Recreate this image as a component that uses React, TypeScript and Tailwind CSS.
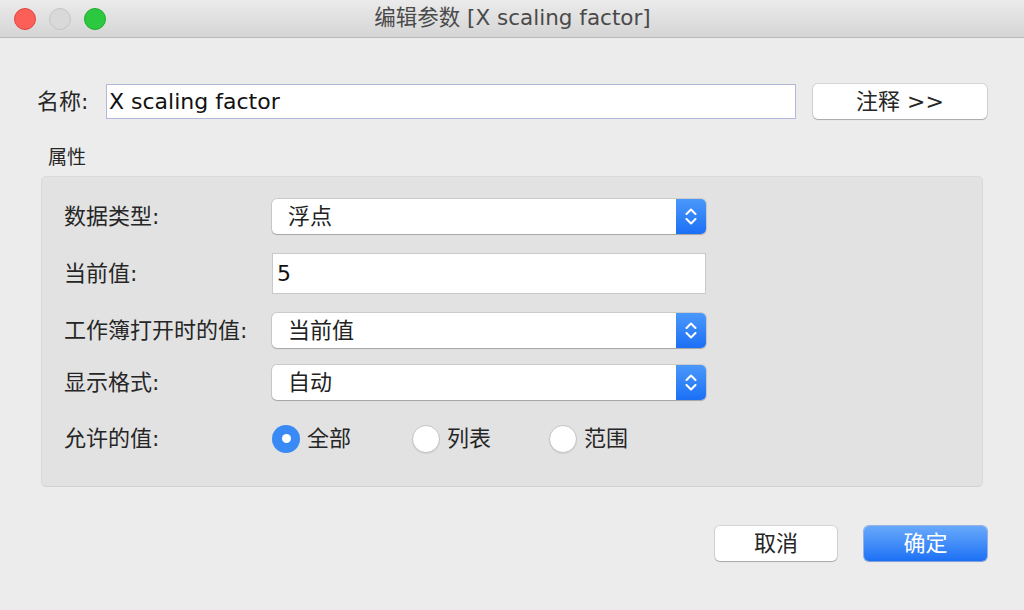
import React from "react";

const font = { fontFamily: '"DejaVu Sans", "Noto Sans CJK SC", sans-serif' };

function Stepper() {
  return (
    <div className="w-[30px] self-stretch rounded-r-[5px] bg-gradient-to-b from-[#4a98fb] to-[#1b6ff5] flex flex-col items-center justify-center gap-[3px]">
      <svg width="12" height="7" viewBox="0 0 12 7" fill="none">
        <path d="M1.5 6 L6 1.5 L10.5 6" stroke="white" strokeWidth="2" strokeLinecap="round" strokeLinejoin="round" />
      </svg>
      <svg width="12" height="7" viewBox="0 0 12 7" fill="none">
        <path d="M1.5 1 L6 5.5 L10.5 1" stroke="white" strokeWidth="2" strokeLinecap="round" strokeLinejoin="round" />
      </svg>
    </div>
  );
}

function Select({ value }: { value: string }) {
  return (
    <div className="w-[434px] h-[35px] flex items-stretch bg-white rounded-[5px] shadow-[0_0_0_1px_rgba(0,0,0,0.10),0_1px_1px_rgba(0,0,0,0.18)]">
      <div className="flex-1 flex items-center pl-[16px] text-[22px] text-[#222]">{value}</div>
      <Stepper />
    </div>
  );
}

function Row({ label, children, className }: { label: string; children: React.ReactNode; className?: string }) {
  return (
    <div className={"flex items-center " + (className ?? "")}>
      <div className="w-[208px] text-[22px] text-[#262626]">{label}</div>
      {children}
    </div>
  );
}

function Radio({ label, checked }: { label: string; checked?: boolean }) {
  return (
    <div className="flex items-center gap-[7px]">
      {checked ? (
        <div className="w-[28px] h-[28px] rounded-full bg-[#3a8af5] flex items-center justify-center">
          <div className="w-[9px] h-[9px] rounded-full bg-white" />
        </div>
      ) : (
        <div className="w-[28px] h-[28px] rounded-full bg-white border border-[#c4c4c4] shadow-[0_1px_1px_rgba(0,0,0,0.08)]" />
      )}
      <span className="text-[22px] text-[#262626]">{label}</span>
    </div>
  );
}

export default function App() {
  return (
    <div className="w-[1024px] h-[610px] bg-[#ececec] flex flex-col overflow-hidden" style={font}>
      <div className="h-[38px] shrink-0 bg-gradient-to-b from-[#ebebeb] to-[#d5d5d5] border-b border-[#b9b9b9] relative flex items-center justify-center">
        <div className="absolute left-[14px] top-[8px] flex gap-[13px]">
          <div className="w-[22px] h-[22px] rounded-full bg-[#fc5f57] border border-[#e0443e]" />
          <div className="w-[22px] h-[22px] rounded-full bg-[#d9d9d9] border border-[#c5c5c5]" />
          <div className="w-[22px] h-[22px] rounded-full bg-[#2cc940] border border-[#1dad2b]" />
        </div>
        <span className="text-[21.5px] text-[#4a4a4a] ml-[1px]">编辑参数 [X scaling factor]</span>
      </div>

      <div className="flex items-center px-[37px] mt-[46px]">
        <span className="text-[22px] text-[#262626] w-[69px]">名称:</span>
        <div className="w-[690px] h-[35px] bg-white border border-[#b3b8d8] flex items-center pl-[2px] text-[22px] text-[#111]">
          X scaling factor
        </div>
        <div className="ml-[17px] w-[174px] h-[35px] bg-white rounded-[5px] shadow-[0_0_0_1px_rgba(0,0,0,0.10),0_1px_1px_rgba(0,0,0,0.2)] flex items-center justify-center text-[22px] text-[#262626]">
          注释 &gt;&gt;
        </div>
      </div>

      <div className="ml-[48px] mt-[26px] text-[19px] text-[#262626] leading-[24px]">属性</div>

      <div className="mx-[41px] mt-[7px] h-[311px] bg-[#e2e2e2] rounded-[5px] border border-[#dadada] border-b-[#d0d0d0] pl-[22px] pt-[22px]">
        <Row label="数据类型:">
          <Select value="浮点" />
        </Row>
        <Row label="当前值:" className="mt-[19px]">
          <div className="w-[434px] h-[41px] bg-white border border-[#c9c9c9] flex items-center pl-[4px] text-[22px] text-[#111]">5</div>
        </Row>
        <Row label="工作簿打开时的值:" className="mt-[19px]">
          <Select value="当前值" />
        </Row>
        <Row label="显示格式:" className="mt-[17px]">
          <Select value="自动" />
        </Row>
        <Row label="允许的值:" className="mt-[21px] h-[35px]">
          <div className="flex items-center">
            <div className="w-[140px]"><Radio label="全部" checked /></div>
            <div className="w-[137px]"><Radio label="列表" /></div>
            <Radio label="范围" />
          </div>
        </Row>
      </div>

      <div className="flex justify-end px-[37px] mt-[39px] gap-[27px]">
        <div className="w-[122px] h-[35px] bg-white rounded-[5px] shadow-[0_0_0_1px_rgba(0,0,0,0.10),0_1px_1px_rgba(0,0,0,0.2)] flex items-center justify-center text-[22px] text-[#262626]">
          取消
        </div>
        <div className="w-[123px] h-[35px] rounded-[5px] bg-gradient-to-b from-[#67a8fb] to-[#1a70f5] shadow-[0_0_0_1px_rgba(20,90,220,0.4),0_1px_1px_rgba(0,0,0,0.15)] flex items-center justify-center text-[22px] text-white">
          确定
        </div>
      </div>
    </div>
  );
}
